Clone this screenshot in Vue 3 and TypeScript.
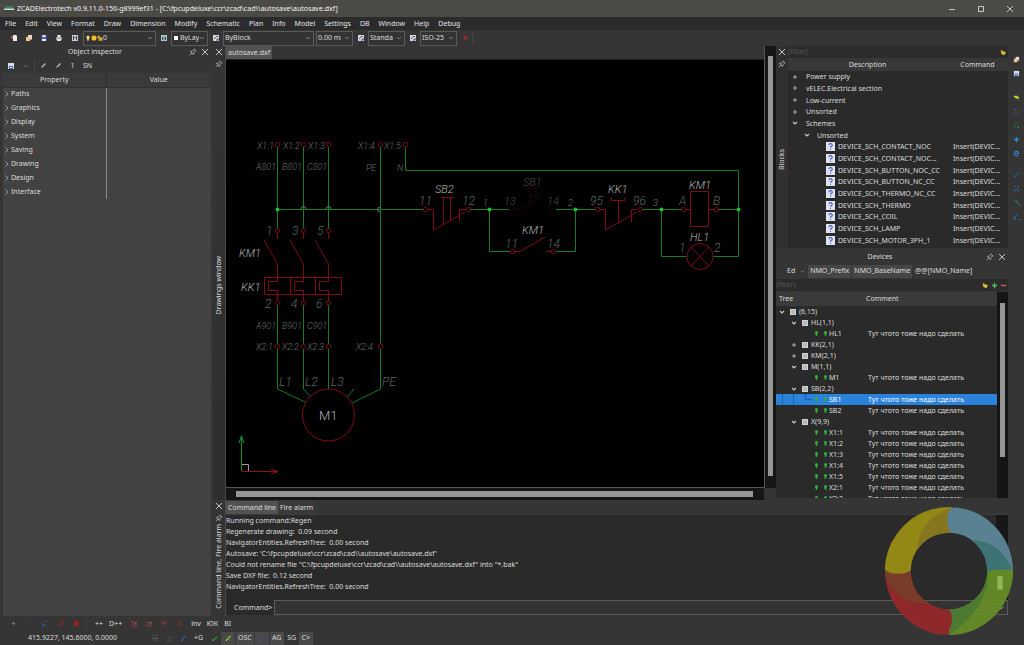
<script setup lang="ts">
import { ref } from 'vue'

const menus = ['File', 'Edit', 'View', 'Format', 'Draw', 'Dimension', 'Modify', 'Schematic', 'Plan', 'Info', 'Model', 'Settings', 'DB', 'Window', 'Help', 'Debug']
const groups = ['Paths', 'Graphics', 'Display', 'System', 'Saving', 'Drawing', 'Design', 'Interface']

interface BlockRow { name: string; level: number; open?: boolean; leaf?: boolean }
const blocks: BlockRow[] = [
  { name: 'Power supply', level: 0 },
  { name: 'vELEC.Electrical section', level: 0 },
  { name: 'Low-current', level: 0 },
  { name: 'Unsorted', level: 0 },
  { name: 'Schemes', level: 0, open: true },
  { name: 'Unsorted', level: 1, open: true },
  ...['CONTACT_NOC', 'CONTACT_NOC...', 'BUTTON_NOC_CC', 'BUTTON_NC_CC', 'THERMO_NC_CC', 'THERMO', 'COIL', 'LAMP', 'MOTOR_3PH_1']
    .map((n) => ({ name: 'DEVICE_SCH_' + n, level: 2, leaf: true })),
]

interface DeviceRow { name: string; level: number; open?: boolean }
const devices: DeviceRow[] = [
  { name: '(6,15)', level: 0, open: true },
  { name: 'HL(1,1)', level: 1, open: true },
  { name: 'HL1', level: 2 },
  { name: 'KK(2,1)', level: 1 },
  { name: 'KM(2,1)', level: 1 },
  { name: 'M(1,1)', level: 1, open: true },
  { name: 'M1', level: 2 },
  { name: 'SB(2,2)', level: 1, open: true },
  { name: 'SB1', level: 2 },
  { name: 'SB2', level: 2 },
  { name: 'X(9,9)', level: 1, open: true },
  ...['X1:1', 'X1:2', 'X1:3', 'X1:4', 'X1:5', 'X2:1', 'X2:2'].map((name) => ({ name, level: 2 })),
]
const selected = ref('SB1')
const comment = 'Тут чтото тоже надо сделать'

const log = [
  'Running command:Regen',
  'Regenerate drawing:  0.09 second',
  'NavigatorEntities.RefreshTree:  0.00 second',
  "Autosave: 'C:\\fpcupdeluxe\\ccr\\zcad\\cad\\\\autosave\\autosave.dxf'",
  'Could not rename file "C:\\fpcupdeluxe\\ccr\\zcad\\cad\\\\autosave\\autosave.dxf" into "*.bak"',
  'Save DXF file:  0.12 second',
  'NavigatorEntities.RefreshTree:  0.00 second',
]
const command = ref('')
const blockFilter = ref('')
const deviceFilter = ref('')

const fileTools = ['new', 'open', 'save', 'print']
const sideTools = ['open', 'savedoc', 'cable', 'dots', 'gdots', 'plus', 'e', 'line', 'net', 'gnet', 'lnet']

const phases = [
  { x: 277, a: '1', b: '2', top: 'X1:1', bottom: 'X2:1', w1: 'A801', w2: 'A901' },
  { x: 303, a: '3', b: '4', top: 'X1:2', bottom: 'X2:2', w1: 'B801', w2: 'B901' },
  { x: 328, a: '5', b: '6', top: 'X1:3', bottom: 'X2:3', w1: 'C801', w2: 'C901' },
]
const terminals = [[380, 144], [405, 144], [380, 346], [425, 209], [468, 209], [512, 251], [553, 251], [597, 209], [640, 209], [683, 209], [716, 209]]
const nodes = [[277, 209], [489, 209], [575, 209], [661, 209], [738, 209]]
const pins: [string, number, number][] = [
  ['11', 419, 205], ['12', 462, 205], ['11', 505, 248], ['14', 547, 248],
  ['95', 590, 205], ['96', 633, 205], ['A', 679, 205], ['B', 713, 205], ['1', 679, 252], ['2', 714, 252],
  ['L1', 279, 386], ['L2', 305, 386], ['L3', 331, 386], ['PE', 382, 386],
]
const names: [string, number, number][] = [
  ['KM1', 239, 257], ['KK1', 241, 291], ['SB2', 435, 193], ['KM1', 522, 234],
  ['KK1', 608, 193], ['KM1', 689, 189], ['HL1', 690, 241],
]
const small: [string, number, number][] = [
  ['X1:4', 358, 149], ['X1:5', 384, 149], ['X2:4', 356, 350], ['PE', 366, 171], ['N', 397, 171],
  ['1', 483, 206], ['2', 568, 206], ['3', 653, 206],
]
</script>

<template>
  <div class="app">
    <svg class="sprites" aria-hidden="true">
      <symbol id="i-x" viewBox="0 0 8 8"><path d="M1 1l6 6M7 1l-6 6" stroke="#c4c4c4" fill="none" /></symbol>
      <symbol id="i-pin" viewBox="0 0 8 8"><path d="M4.8.8l2.4 2.4M5.2 1.4L3 3.3l-1.6.1 3.2 3.2.1-1.6 2-2.2M3 5L.8 7.2" stroke="#b8b8b8" stroke-width=".8" fill="none" /></symbol>
      <symbol id="i-down" viewBox="0 0 8 8"><path d="M1.5 2.7L4 5.2l2.5-2.5" stroke="#999" fill="none" /></symbol>
      <symbol id="i-right" viewBox="0 0 8 8"><path d="M2.5 1.5L5 4 2.5 6.5" stroke="#999" fill="none" /></symbol>
      <symbol id="i-open-node" viewBox="0 0 8 8"><path d="M2 3l2 2 2-2" stroke="#c8c8c8" stroke-width="1.2" fill="none" /></symbol>
      <symbol id="i-closed-node" viewBox="0 0 8 8"><path d="M4 2v4M2 4h4" stroke="#a8a8a8" fill="none" /></symbol>
      <symbol id="i-new" viewBox="0 0 8 8"><path d="M3 1h3l1 1v5H3z" fill="#eee" /><path d="M1 2.5h2v2H1z" fill="#d9621f" /></symbol>
      <symbol id="i-open" viewBox="0 0 8 8"><path d="M3 1h4v4H3z" fill="#ddd" /><path d="M1 3h3l1 1v3H1z" fill="#f0c58c" /><path d="M5 5h2v1H5z" fill="#e57a20" /></symbol>
      <symbol id="i-save" viewBox="0 0 8 8"><path d="M1.5 1h5v6h-5z" fill="#4a62b8" /><path d="M2.5 1h3v2h-3zM2 5h4v2H2z" fill="#e6e8f0" /></symbol>
      <symbol id="i-print" viewBox="0 0 8 8"><path d="M2.5 1h3v2h-3z" fill="#eee" /><rect x="1" y="3" width="6" height="3" rx="1" fill="#a9b3bf" /><path d="M2 5h4v2H2z" fill="#d3dae2" /></symbol>
      <symbol id="i-layers" viewBox="0 0 8 8"><path d="M1 1h6v6H1z" fill="#c6ced2" /><path d="M2 2h1v4H2zM5 2h1v4H5z" fill="#445" /><path d="M3 3h2v1H3z" fill="#b35a5a" /></symbol>
      <symbol id="i-colors" viewBox="0 0 8 8"><path d="M1 1h6v6H1z" fill="#b8c4cc" /><path d="M2 3h1v3H2z" fill="#2a5da8" /><path d="M3.5 2h1v4h-1z" fill="#3d9043" /><path d="M5 3h1v3H5z" fill="#3f3f48" /></symbol>
      <symbol id="i-style" viewBox="0 0 8 8"><path d="M1 1h6v6H1z" fill="#d4d9e2" /><path d="M2 5l3-3 1 1" stroke="#a33248" fill="none" /><path d="M4 6h2V4" stroke="#334a80" fill="none" /></symbol>
      <symbol id="i-bulb" viewBox="0 0 8 8"><path d="M4 .8a2.400 2.400 0 0 1 1.200 4.300L4.800 7.500H3.200l-.4-2.400A2.400 2.400 0 0 1 4 .8z" fill="#ffd76a" /></symbol>
      <symbol id="i-sun" viewBox="0 0 8 8"><circle cx="4" cy="4" r="3.400" fill="#f3c328" /></symbol>
      <symbol id="i-lock" viewBox="0 0 8 8"><path d="M.5 1h3v2h4v4.500H2v-3.500H.5z" fill="#d8a52b" /></symbol>
      <symbol id="i-red" viewBox="0 0 8 8"><path d="M1 3l4-1 2 1-2 3z" fill="#a02d25" /></symbol>
      <symbol id="i-pen" viewBox="0 0 8 8"><path d="M2 6l1-2 3-3 1 1-3 3z" fill="#b4bab6" /></symbol>
      <symbol id="i-broom" viewBox="0 0 8 8"><path d="M1 1l2 1 4 2-1 1-1 2-3-1-1-2z" fill="#d2bd35" /><path d="M1 1l2 2" stroke="#c57524" /></symbol>
      <symbol id="i-savedoc" viewBox="0 0 8 8"><path d="M1 1h6v6H1z" fill="#d7deea" /><path d="M2 4h4v3H2z" fill="#3b66b0" /><path d="M3 5h2v1H3z" fill="#fff" /></symbol>
      <symbol id="i-cable" viewBox="0 0 8 8"><path d="M1 3h3v1h3" stroke="#d8d51c" stroke-width="2" fill="none" /><path d="M5 6h2" stroke="#3d9a35" /></symbol>
      <symbol id="i-dots" viewBox="0 0 8 8"><path d="M1 1h2v1H1zM1 6h1v1H1zM4 6h2v1H4z" fill="#2f6fd8" /><path d="M5 2h2v1H5zM2 4h1v1H2z" fill="#a8323b" /></symbol>
      <symbol id="i-spark" viewBox="0 0 8 8"><path d="M5 1h2v1H5zM1 3h1v1H1zM3 5h2v2H3z" fill="#2f6fd8" /></symbol>
      <symbol id="i-speck" viewBox="0 0 8 8"><path d="M3 2h2v1H3z" fill="#8e2626" /></symbol>
      <symbol id="i-gdots" viewBox="0 0 8 8"><path d="M2 2a3 3 0 0 1 4 0M2 4v2l2 1" stroke="#257a37" fill="none" /><path d="M5 5h2v2H5z" fill="#28893d" /></symbol>
      <symbol id="i-plus" viewBox="0 0 8 8"><path d="M4 1v6M1 4h6" stroke="#2787d8" stroke-width="1.500" /></symbol>
      <symbol id="i-e" viewBox="0 0 8 8"><path d="M6 6.500H4a2.500 2.500 0 1 1 2.500-2.500H3" stroke="#2a88d4" stroke-width="1.300" fill="none" /></symbol>
      <symbol id="i-line" viewBox="0 0 8 8"><path d="M1 6h2M3 5l2-2M6 2h1" stroke="#2787d8" fill="none" /></symbol>
      <symbol id="i-net" viewBox="0 0 8 8"><path d="M1 1h2v1H1zM5 1h2v1H5zM3 4h2v1H3zM1 6h2v1H1zM5 6h2v1H5z" fill="#2579c2" /></symbol>
      <symbol id="i-gnet" viewBox="0 0 8 8"><path d="M1 3l2-2 2 1" stroke="#2579c2" fill="none" /><path d="M3 4h3v2" stroke="#2a8a40" fill="none" /><path d="M7 7h1v1H7z" fill="#aaa" /></symbol>
      <symbol id="i-lnet" viewBox="0 0 8 8"><path d="M2 5l3-4M1 4v3h3" stroke="#2579c2" fill="none" /><path d="M7 7h1v1H7z" fill="#aaa" /></symbol>
      <symbol id="i-help" viewBox="0 0 9 9"><path d="M0 0h9v9H0z" fill="#dfe3ee" /><path d="M3 3.2a1.6 1.6 0 1 1 2.3 1.4c-.6.3-.8.5-.8 1.1M4.5 6.7v1" stroke="#3654b5" stroke-width="1.1" fill="none" /></symbol>
      <symbol id="i-group" viewBox="0 0 8 8"><path d="M1 1h6v6H1z" fill="#d2d2d2" /><path d="M2 3h4M2 5h4" stroke="#8a8a8a" stroke-width=".7" /></symbol>
      <symbol id="i-dev" viewBox="0 0 5 7"><path d="M2.500 1a1.600 1.600 0 0 1 1.100 2.700L3 6H2l-.6-2.300A1.600 1.600 0 0 1 2.500 1z" fill="#2fae38" /></symbol>
      <symbol id="i-redline" viewBox="0 0 8 8"><path d="M1 6l5-5M3 7l4-4" stroke="#8e2626" stroke-width="1.2" /></symbol>
      <symbol id="i-redsq" viewBox="0 0 8 8"><path d="M2 1h4l1 3-1 3H2L1 4z" fill="#a11f1f" /></symbol>
      <symbol id="i-redbox" viewBox="0 0 8 8"><path d="M1 7V1l2 2h3v4z" stroke="#a03838" fill="none" /><path d="M4 5l2-3" stroke="#8a8a8a" stroke-width=".8" /></symbol>
      <symbol id="i-redflag" viewBox="0 0 8 8"><path d="M2 7V1l3 4 2-4" stroke="#a03838" fill="none" /></symbol>
      <symbol id="i-dot" viewBox="0 0 8 8"><path d="M4 2v4M2 4h4" stroke="#777" /></symbol>
      <symbol id="i-grid" viewBox="0 0 8 8"><path d="M2 0v8M5.500 0v8M0 4h8" stroke="#707070" stroke-dasharray="1 1" /></symbol>
      <symbol id="i-hatch" viewBox="0 0 8 8"><path d="M1 5l4-4M1 8l6-6M4 8l3-3" stroke="#707070" stroke-dasharray="1 1" /></symbol>
      <symbol id="i-blue" viewBox="0 0 8 8"><path d="M1.500 7l4.500-6" stroke="#2d5fb4" stroke-width="1.300" /></symbol>
      <symbol id="i-check" viewBox="0 0 8 8"><path d="M1 5l1.500 1.500L7 2" stroke="#249b2f" stroke-width="1.500" fill="none" /></symbol>
      <symbol id="i-cross" viewBox="0 0 8 8"><path d="M1 6.500L6.500 1" stroke="#8bd038" stroke-width="1.600" /><path d="M2 3l4 3" stroke="#3f9a35" /></symbol>
    </svg>

    <header class="title">
      <svg class="logo" viewBox="0 0 10 8"><path d="M1 1h8v2H1z" fill="#3c7f5b" /><path d="M0 3.500h10v1.500H0z" fill="#d9dedb" /><path d="M1 5h8v2H1z" fill="#2b4f3d" /></svg>
      <h1>ZCADElectrotech v0.9.11.0-150-g8999ef31 - [C:\fpcupdeluxe\ccr\zcad\cad\\autosave\autosave.dxf]</h1>
      <button aria-label="Minimize"><svg viewBox="0 0 8 8"><path d="M1 4.500h6" stroke="#bbb" /></svg></button>
      <button aria-label="Maximize"><svg viewBox="0 0 8 8"><path d="M1.500 1.500h5v5h-5z" stroke="#ccc" fill="none" /></svg></button>
      <button aria-label="Close"><svg><use href="#i-x" /></svg></button>
    </header>

    <nav class="menu"><button v-for="m in menus" :key="m">{{ m }}</button></nav>

    <div class="toolbar">
      <button v-for="t in fileTools" :key="t" class="tool" :aria-label="t"><svg><use :href="'#i-' + t" /></svg></button>
      <button class="tool layers" aria-label="layers"><svg><use href="#i-layers" /></svg></button>
      <label class="combo c-layer">
        <svg><use href="#i-bulb" /></svg><svg><use href="#i-sun" /></svg><svg><use href="#i-lock" /></svg>
        <select aria-label="Layer"><option>0</option></select><svg class="chev"><use href="#i-down" /></svg>
      </label>
      <button class="tool" aria-label="colors"><svg><use href="#i-colors" /></svg></button>
      <label class="combo c-small"><i class="swatch"></i><select class="tight" aria-label="Color"><option>ByLayer</option></select><svg class="chev"><use href="#i-down" /></svg></label>
      <button class="tool" aria-label="line types"><svg><use href="#i-style" /></svg></button>
      <label class="combo c-block"><select aria-label="Line type"><option>ByBlock</option></select><svg class="chev"><use href="#i-down" /></svg></label>
      <label class="combo c-small gap"><select aria-label="Line weight"><option>0.00 mm</option></select><svg class="chev"><use href="#i-down" /></svg></label>
      <button class="tool" aria-label="text styles"><svg><use href="#i-style" /></svg></button>
      <label class="combo c-small"><select aria-label="Text style"><option>Standard</option></select><svg class="chev"><use href="#i-down" /></svg></label>
      <button class="tool" aria-label="dimension styles"><svg><use href="#i-style" /></svg></button>
      <label class="combo c-small"><select aria-label="Dimension style"><option>ISO-25</option></select><svg class="chev"><use href="#i-down" /></svg></label>
      <button class="tool" aria-label="red"><svg><use href="#i-red" /></svg></button>
      <i class="sep"></i>
    </div>

    <main class="work">
      <aside class="inspector">
        <div class="caption">
          <h2>Object inspector</h2>
          <button aria-label="Pin"><svg><use href="#i-pin" /></svg></button>
          <button aria-label="Close"><svg><use href="#i-x" /></svg></button>
        </div>
        <div class="itools">
          <button class="tool" aria-label="save"><svg><use href="#i-savedoc" /></svg></button>
          <button class="tool" aria-label="more"><svg class="faint"><use href="#i-down" /></svg></button>
          <i class="sep"></i>
          <button class="tool" aria-label="edit"><svg><use href="#i-pen" /></svg></button>
          <button class="tool" aria-label="pick"><svg><use href="#i-pen" /></svg></button>
          <button class="tool">1</button>
          <button class="tool">SN</button>
        </div>
        <div class="props">
          <table>
            <thead><tr><th class="key">Property</th><th>Value</th></tr></thead>
            <tbody>
              <tr v-for="g in groups" :key="g"><td><button><svg><use href="#i-right" /></svg>{{ g }}</button></td><td></td></tr>
            </tbody>
          </table>
        </div>
      </aside>

      <div class="middle">
        <div class="upper">
          <section class="drawing">
            <div class="strip">
              <button aria-label="Close"><svg><use href="#i-x" /></svg></button>
              <button aria-label="Pin"><svg><use href="#i-pin" /></svg></button>
              <span class="vlabel draw-label">Drawings window</span>
            </div>
            <div class="sheet">
              <div class="tabs"><button class="on">autosave.dxf</button></div>
              <div class="canvas">
                <svg viewBox="226 60 538 427" preserveAspectRatio="xMinYMin meet">
                  <g class="wire">
                    <g v-for="p in phases" :key="p.x">
                      <path :d="`M${p.x + .5} 147V229M${p.x + .5} 305V344M${p.x + .5} 349V389`" />
                    </g>
                    <path d="M380.500 147V344M380.500 349V389L352 403M277.500 389L305 402M303.500 389L311 397M354 389L347 397" />
                    <path d="M277 209.500H423M470 209.500H509M556 209.500H595M642 209.500H681M718 209.500H738" />
                    <path d="M405.500 147V170.500H738.500V256.500H713M489.500 209V251.500H510M556 251.500H575.500V209M661.500 209V256.500H687" />
                  </g>
                  <g class="part">
                    <g v-for="p in phases" :key="p.x">
                      <circle :cx="p.x + .5" cy="144.500" r="2.200" /><circle :cx="p.x + .5" cy="230.500" r="2" />
                      <circle :cx="p.x + .5" cy="303" r="2" /><circle :cx="p.x + .5" cy="346.500" r="2.200" />
                      <path :d="`M${p.x + .5} 233V239M${p.x - 13} 240L${p.x + .5} 264V281.500H${p.x - 8.5}V290.500H${p.x + .5}V301`" />
                    </g>
                    <path d="M264.500 277.500H341.500V294.500H264.500zM290.500 277V294M315.500 277V294" />
                    <circle v-for="t in terminals" :key="t.join()" :cx="t[0] + .5" :cy="t[1] + .5" r="2.200" />
                    <circle cx="328.500" cy="415" r="26" />
                    <path d="M428 209.500H433.500V230L465 212M459.500 221V209.500H466M441 197.500H454M443.500 197V224M450.500 197V220" />
                    <path d="M514 251.500H520L545 237M546 251.500H551" />
                    <path d="M600 209.500H605.500V230L637 212M631.500 222V209.500H637M611.500 197V200.500H625V197M618.500 200V222" />
                    <path d="M686 209.500H690.500M708.500 209.500H714M690.500 191.500H708.500V226.500H690.500z" />
                    <circle cx="700" cy="256.500" r="13" /><path d="M691 247L709 266M709 247L691 266" />
                  </g>
                  <path class="ghost" d="M512 209H520L542 196M550 209H555M528 188H540M530 188V204M536 188V200" />
                  <g class="nodes"><circle v-for="n in nodes" :key="n[0]" :cx="n[0] + .5" :cy="n[1] + .5" r="2" /></g>
                  <path class="hop" d="M301 209a2.500 2.500 0 0 1 5 0M326 209a2.500 2.500 0 0 1 5 0M380 207a2.500 2.500 0 0 0 0 5" />
                  <g class="small">
                    <template v-for="p in phases" :key="p.x">
                      <text :x="p.x - 20" y="149">{{ p.top }}</text>
                      <text :x="p.x - 21" y="170">{{ p.w1 }}</text>
                      <text :x="p.x - 21" y="329">{{ p.w2 }}</text>
                      <text :x="p.x - 21" y="350">{{ p.bottom }}</text>
                    </template>
                    <text v-for="s in small" :key="s.join()" :x="s[1]" :y="s[2]">{{ s[0] }}</text>
                  </g>
                  <g class="pins">
                    <template v-for="p in phases" :key="p.x">
                      <text :x="p.x - 11" y="235">{{ p.a }}</text><text :x="p.x - 12" y="308">{{ p.b }}</text>
                    </template>
                    <text v-for="s in pins" :key="s.join()" :x="s[1]" :y="s[2]">{{ s[0] }}</text>
                  </g>
                  <g class="ghost-text"><text x="504" y="205">13</text><text x="547" y="205">14</text><text x="523" y="186">SB1</text></g>
                  <g class="names"><text v-for="s in names" :key="s.join()" :x="s[1]" :y="s[2]">{{ s[0] }}</text></g>
                  <text class="motor" x="319" y="420">M1</text>
                  <path class="axis-y" d="M241.500 471V436M239 443L241.500 436L244 443" />
                  <path class="axis-x" d="M242 471.500H278M271 469L278 471.500L271 474" />
                  <path class="axis-o" d="M242 464.500H248.500V471" />
                </svg>
              </div>
              <div class="hscroll"><i></i></div>
            </div>
            <div class="vscroll"><i></i></div>
          </section>

          <aside class="docks">
            <section class="blocks">
              <div class="strip">
                <button aria-label="Close"><svg><use href="#i-x" /></svg></button>
                <button aria-label="Pin"><svg><use href="#i-pin" /></svg></button>
                <span class="vlabel block-label">Blocks</span>
              </div>
              <div class="panel">
                <div class="filter">
                  <input v-model="blockFilter" placeholder="(filter)" aria-label="Filter blocks" />
                  <button aria-label="Clear"><svg><use href="#i-broom" /></svg></button>
                </div>
                <table>
                  <thead><tr><th>Description</th><th class="cmd">Command</th></tr></thead>
                  <tbody>
                    <tr v-for="(b, i) in blocks" :key="i">
                      <td :class="'bl' + b.level">
                        <div class="cell">
                          <svg v-if="b.leaf" class="help"><use href="#i-help" /></svg>
                          <button v-else class="toggle" :aria-label="b.name"><svg><use :href="b.open ? '#i-open-node' : '#i-closed-node'" /></svg></button>
                          {{ b.name }}
                        </div>
                      </td>
                      <td>{{ b.leaf ? 'Insert(DEVIC...' : '' }}</td>
                    </tr>
                  </tbody>
                </table>
              </div>
            </section>

            <section class="devices">
              <div class="caption">
                <h2>Devices</h2>
                <button aria-label="Pin"><svg><use href="#i-pin" /></svg></button>
                <button aria-label="Close"><svg><use href="#i-x" /></svg></button>
              </div>
              <div class="dtools">
                <button>Ed</button><svg class="mini"><use href="#i-down" /></svg>
                <button class="on">NMO_Prefix</button><button class="on">NMO_BaseName</button><button>@@[NMO_Name]</button>
              </div>
              <div class="filter">
                <input v-model="deviceFilter" placeholder="(filter)" aria-label="Filter devices" />
                <button aria-label="Clear"><svg><use href="#i-broom" /></svg></button>
                <button aria-label="Expand"><svg viewBox="0 0 8 8"><path d="M4 1v6M1 4h6" stroke="#4fc04f" stroke-width="1.500" /></svg></button>
                <button aria-label="Collapse"><svg viewBox="0 0 8 8"><path d="M1 4h6" stroke="#e0603a" stroke-width="1.500" /></svg></button>
              </div>
              <div class="treebox">
                <table>
                  <thead><tr><th class="tree">Tree</th><th>Comment</th></tr></thead>
                  <tbody>
                    <tr v-for="d in devices" :key="d.name" :class="{ sel: d.name === selected }" @click="selected = d.name">
                      <td :class="'dl' + d.level">
                        <div class="cell">
                          <template v-if="d.level < 2">
                            <button class="toggle" :aria-label="d.name"><svg><use :href="d.open ? '#i-open-node' : '#i-closed-node'" /></svg></button>
                            <svg class="grp"><use href="#i-group" /></svg>
                          </template>
                          <template v-else>
                            <svg class="guide" viewBox="0 0 38 11"><path v-if="d.name === selected" d="M6.500 0v11M17.500 0v11M29.500 0v6M29 5.500h7" stroke="#1c5fa5" fill="none" /></svg>
                            <svg class="dev"><use href="#i-dev" /></svg><svg class="dev"><use href="#i-dev" /></svg>
                          </template>
                          {{ d.name }}
                        </div>
                      </td>
                      <td>{{ d.level === 2 ? comment : '' }}</td>
                    </tr>
                  </tbody>
                </table>
                <div class="tscroll"><i></i></div>
              </div>
            </section>
          </aside>
        </div>

        <section class="console">
          <div class="strip">
            <button aria-label="Close"><svg><use href="#i-x" /></svg></button>
            <button aria-label="Pin"><svg><use href="#i-pin" /></svg></button>
            <span class="vlabel">Command line, Fire alarm</span>
          </div>
          <div class="cbody">
            <div class="tabs"><button class="on">Command line</button><button>Fire alarm</button></div>
            <div class="logbox">
              <pre class="log"><span v-for="(l, i) in log" :key="i">{{ l }}</span></pre>
              <div class="lscroll"></div>
            </div>
            <div class="prompt">
              <label for="cmd">Command&gt;</label>
              <div class="cmdbox"><input id="cmd" v-model="command" /><button aria-label="History"><svg><use href="#i-down" /></svg></button></div>
            </div>
          </div>
        </section>
      </div>

      <nav class="side"><button v-for="t in sideTools" :key="t" :class="'s-' + t" :aria-label="t"><svg><use :href="'#i-' + t" /></svg></button></nav>
    </main>

    <div class="bottom">
      <button v-for="t in ['dot', 'speck', 'spark']" :key="t" class="tool" :aria-label="t"><svg><use :href="'#i-' + t" /></svg></button>
      <button class="tool lead" aria-label="cut"><svg><use href="#i-redline" /></svg></button>
      <button class="tool" aria-label="stop"><svg><use href="#i-redsq" /></svg></button>
      <i class="sep"></i>
      <button class="txt">++</button><button class="txt">D++</button>
      <button class="tool lead" aria-label="box"><svg><use href="#i-redbox" /></svg></button>
      <button class="tool" aria-label="box 2"><svg><use href="#i-redbox" /></svg></button>
      <button class="tool" aria-label="flag"><svg><use href="#i-redflag" /></svg></button>
      <button class="tool" aria-label="line"><svg><use href="#i-redline" /></svg></button>
      <button class="txt">inv</button><button class="txt">ЮК</button><button class="txt">BI</button>
    </div>

    <footer class="status">
      <output>415.9227, 145.6000, 0.0000</output>
      <button class="tool" aria-label="snap"><svg><use href="#i-grid" /></svg></button>
      <button class="tool" aria-label="grid"><svg><use href="#i-hatch" /></svg></button>
      <button class="tool" aria-label="ortho"><svg><use href="#i-blue" /></svg></button>
      <button class="flag plain">+G</button>
      <button class="tool" aria-label="osnap"><svg><use href="#i-check" /></svg></button>
      <button class="tool on" aria-label="track"><svg><use href="#i-cross" /></svg></button>
      <button class="flag on">OSC</button>
      <button class="tool on" aria-label="polar"><svg class="faint"><use href="#i-blue" /></svg></button>
      <button class="flag on">AG</button><button class="flag">SG</button><button class="flag on">C&gt;</button>
    </footer>

    <svg class="ring" viewBox="0 0 384 384" aria-hidden="true">
      <clipPath id="donut"><path clip-rule="evenodd" d="M0 192a192 192 0 1 0 384 0a192 192 0 1 0-384 0M77 192a115 115 0 1 0 230 0a115 115 0 1 0-230 0" /></clipPath>
      <g clip-path="url(#donut)">
        <path d="M0 0H200V192H0z" fill="#988b16" />
        <path d="M200 0C130 30 95 70 95 150L200 120z" fill="#8b7a20" />
        <path d="M192 192H384V384H192z" fill="#648b27" />
        <path d="M310 180C320 260 260 340 192 384V250z" fill="#4f7d32" />
        <path d="M0 185H192V384H0z" fill="#93282b" />
        <path d="M0 185H80L150 290Q40 300 0 210z" fill="#7b3e2a" />
        <path d="M0 100V188Q10 200 40 200Q66 200 78 188V100z" fill="#988b16" />
        <path d="M210 0C180 0 180 76 206 80L300 192H384V0z" fill="#5b8596" />
        <path d="M240 100Q340 90 384 192H300z" fill="#3f7778" />
        <path d="M307 230Q305 188 330 188H384V240z" fill="#668d26" />
        <path d="M170 384C205 375 210 315 185 300L140 300V384z" fill="#93282b" />
      </g>
      <rect x="337" y="207" width="16" height="41" fill="#96bd5a" />
    </svg>
  </div>
</template>

<style>
html, body { margin: 0; background: #353535; }
</style>

<style scoped>
.app { position: relative; display: flex; flex-direction: column; height: 100vh; background: #353535; color: #dcdcdc; font: 7px/10px "Noto Sans", "Open Sans", sans-serif; overflow: hidden; }
* { box-sizing: border-box; }
.sprites { position: absolute; width: 0; height: 0; }
button, input, select { font: inherit; color: inherit; background: none; border: 0; padding: 0; margin: 0; outline: 0; white-space: nowrap; }
button { display: flex; align-items: center; justify-content: center; }
svg { width: 8px; height: 8px; display: block; flex: none; }
h1, h2 { font: inherit; margin: 0; }
table { border-collapse: collapse; table-layout: fixed; width: 100%; }
td, th { padding: 0; font-weight: 400; text-align: left; white-space: nowrap; overflow: hidden; line-height: 10px; }
.sep { width: 1px; height: 12px; background: #454545; }
.faint { opacity: .5; }

.title { display: flex; align-items: center; flex: none; height: 17px; background: #4b4a47; color: #f4f4f4; padding-left: 4px; }
.title h1 { flex: 1; padding-left: 3px; }
.title .logo { width: 10px; height: 8px; }
.title button { width: 29px; height: 16px; }
.menu { display: flex; flex: none; gap: 9px; height: 13px; background: #2b2b2b; padding-left: 5px; color: #e2e2e2; }
.toolbar { display: flex; align-items: center; flex: none; height: 16px; padding-left: 6px; }
.tool { width: 15px; height: 14px; flex: none; }
.layers { width: 17px; }
.combo { display: flex; align-items: center; height: 15px; border: 1px solid #5a5a5a; padding: 0 2px 0 1px; background: #333; }
.combo select { appearance: none; flex: 1; min-width: 0; width: 0; height: 13px; margin-right: 3px; overflow: hidden; text-overflow: clip; }
.combo .tight { margin-right: 0; }
.combo svg { width: 6px; height: 6px; }
.c-layer { width: 73px; }
.c-small { width: 37px; }
.c-block { width: 91px; }
.gap { margin-left: 2px; }
.swatch { width: 4px; height: 4px; background: #fff; margin: 0 2px 0 1px; }

.work { display: flex; flex: 1; min-height: 0; }
.inspector { width: 211px; display: flex; flex-direction: column; padding-left: 3px; }
.caption { display: flex; align-items: center; flex: none; height: 12px; }
.caption h2 { flex: 1; text-align: center; }
.caption button { width: 12px; }
.itools { display: flex; align-items: center; height: 15px; }
.itools .sep { margin: 0 0 0 1px; }
.props { flex: 1; background: #424242; }
.props th { height: 14px; background: #3a3a3a; text-align: center; border-bottom: 1px solid #303030; }
.props .key { width: 103px; }
.props th + th { border-left: 1px solid #2f2f2f; }
.props td { height: 14px; }
.props td + td { border-left: 1px solid #8a8a8a; }

.middle { flex: 1; min-width: 0; display: flex; flex-direction: column; margin-left: 2px; }
.upper { flex: 1; display: flex; min-height: 0; }
.strip { width: 12px; flex: none; display: flex; flex-direction: column; align-items: center; }
.strip button { width: 12px; height: 12px; }
.vlabel { writing-mode: vertical-rl; transform: rotate(180deg); line-height: 12px; white-space: nowrap; }
.drawing { flex: 1; min-width: 0; display: flex; }
.drawing .strip { background: linear-gradient(#353535, #2e2e2e); }
.draw-label { margin: auto 0; }
.sheet { flex: 1; min-width: 0; display: flex; flex-direction: column; border-left: 1px solid #484848; }
.tabs { display: flex; flex: none; height: 13px; }
.tabs button { padding: 0 2px; background: #3a3a3a; }
.tabs .on { background: #525252; }
.canvas { flex: 1; min-height: 0; background: #000; border-top: 1px solid #222; border-bottom: 1px solid #555; overflow: hidden; }
.canvas svg { width: 100%; height: auto; }
.hscroll { flex: none; height: 12px; background: #161616; padding: 3px 11px 3px 10px; }
.hscroll i, .vscroll i, .tscroll i { display: block; height: 100%; background: #979797; }
.vscroll { width: 12px; border-left: 1px solid #555; background: #161616; padding: 10px 3px 12px; margin-bottom: 12px; }

.wire { stroke: #157d26; fill: none; }
.part { stroke: #7c0c1a; fill: none; }
.ghost { stroke: #4a0d16; fill: none; stroke-dasharray: 1 2; }
.nodes { fill: #1fc02b; }
.hop { stroke: #5c8464; fill: none; }
.small, .pins, .names, .ghost-text, .motor { font-family: Roboto, "Liberation Sans", sans-serif; font-style: italic; font-weight: 300; }
.small { font-size: 9px; fill: #64706c; }
.pins { font-size: 12px; fill: #5c6864; }
.names { font-size: 11px; fill: #b4b4b4; }
.ghost-text { font-size: 11px; fill: #45494b; }
.motor { font-size: 13px; font-style: normal; fill: #b4b4b4; }
.axis-y { stroke: #149428; fill: none; }
.axis-x { stroke: #8e1020; fill: none; }
.axis-o { stroke: #999; fill: none; }

.docks { width: 232px; flex: none; display: flex; flex-direction: column; min-height: 0; }
.blocks { display: flex; height: 202px; background: #303030; flex: none; }
.block-label { margin-top: 79px; }
.panel { flex: 1; min-width: 0; background: #2a2a2a; }
.filter { display: flex; align-items: center; flex: none; height: 12px; background: #2c2c2c; }
.filter input { flex: 1; min-width: 0; height: 10px; }
.filter input::placeholder { color: #585858; opacity: 1; }
.filter button { width: 10px; }
.filter svg { width: 7px; height: 7px; }
.blocks th { height: 13px; background: #383838; text-align: center; }
.blocks .cmd { width: 61px; }
.blocks table { height: 188px; }
.blocks td { line-height: 9px; }
.blocks td:last-child { padding-left: 6px; }
.cell { display: flex; align-items: center; }
.toggle { width: 8px; }
.bl0 .toggle { margin: 0 7px 0 3px; }
.bl1 .toggle { margin: 0 6px 0 15px; }
.help { width: 9px; height: 9px; margin: 0 3px 0 38px; }

.devices { flex: 1; min-height: 0; display: flex; flex-direction: column; padding-top: 3px; }
.dtools { display: flex; align-items: center; flex: none; height: 16px; padding-left: 9px; gap: 1px; }
.dtools button { height: 13px; padding: 0 2px; }
.dtools .on { background: #464646; }
.mini { width: 5px; height: 5px; margin: 0 2px; }
.devices .filter button { width: 9px; }
.treebox { flex: 1; min-height: 0; display: flex; background: #2a2a2a; overflow: hidden; margin: 1px 0 2px; }
.treebox table { flex: 1; width: 0; align-self: flex-start; }
.treebox th { height: 14px; background: #3a3a3a; padding-left: 3px; }
.treebox .tree { width: 87px; }
.treebox td { height: 11px; }
.treebox td:last-child { padding-left: 5px; }
.treebox .sel { background: #2a82da; color: #fff; }
.dl0 .toggle { margin: 0 3px 0 2px; }
.dl1 .toggle { margin: 0 3px 0 14px; }
.grp { width: 8px; margin-right: 2px; }
.guide { width: 38px; height: 11px; }
.dev { width: 5px; height: 7px; margin-right: 4px; }
.dev + .dev { margin-right: 1px; }
.tscroll { width: 11px; background: #151515; padding: 11px 3px 41px; }

.console { display: flex; height: 116px; flex: none; }
.cbody { flex: 1; min-width: 0; display: flex; flex-direction: column; border-left: 1px solid #484848; padding: 1px 0; }
.logbox { display: flex; flex: 1; min-height: 0; background: #2a2a2a; border-top: 1px solid #3c3c3c; }
.log { flex: 1; margin: 0; font: inherit; line-height: 11px; }
.log span { display: block; }
.lscroll { width: 12px; background: #171717; }
.prompt { display: flex; align-items: center; flex: none; height: 15px; background: #2a2a2a; }
.prompt label { padding: 0 2px 0 8px; }
.cmdbox { flex: 1; display: flex; height: 15px; border: 1px solid #5a5a5a; background: #333; }
.cmdbox input { flex: 1; }
.cmdbox button { width: 12px; }

.side { width: 16px; display: flex; flex-direction: column; align-items: center; padding-top: 6px; }
.side button { width: 15px; height: 14px; }
.side svg { width: 7px; height: 7px; }
.side .s-cable { margin-top: 10px; }
.side .s-line { margin-top: 7px; }

.bottom { display: flex; align-items: center; flex: none; height: 15px; padding-left: 6px; }
.bottom .sep { margin: 0 4px 0 2px; }
.bottom .lead { margin-left: 3px; }
.txt { padding: 0 2px 0 4px; }
.bottom svg, .status svg { width: 7px; height: 7px; }
.status { display: flex; align-items: center; flex: none; height: 14px; padding-left: 28px; }
.status output { width: 120px; }
.flag { height: 13px; padding: 0 2px; min-width: 14px; }
.plain { width: 17px; }
.status .on { background: #494949; margin-right: 1px; height: 13px; }
.status .tool { width: 14px; }
.ring { position: absolute; right: 11px; bottom: 10px; width: 128px; height: 128px; pointer-events: none; opacity: .96; }
</style>
